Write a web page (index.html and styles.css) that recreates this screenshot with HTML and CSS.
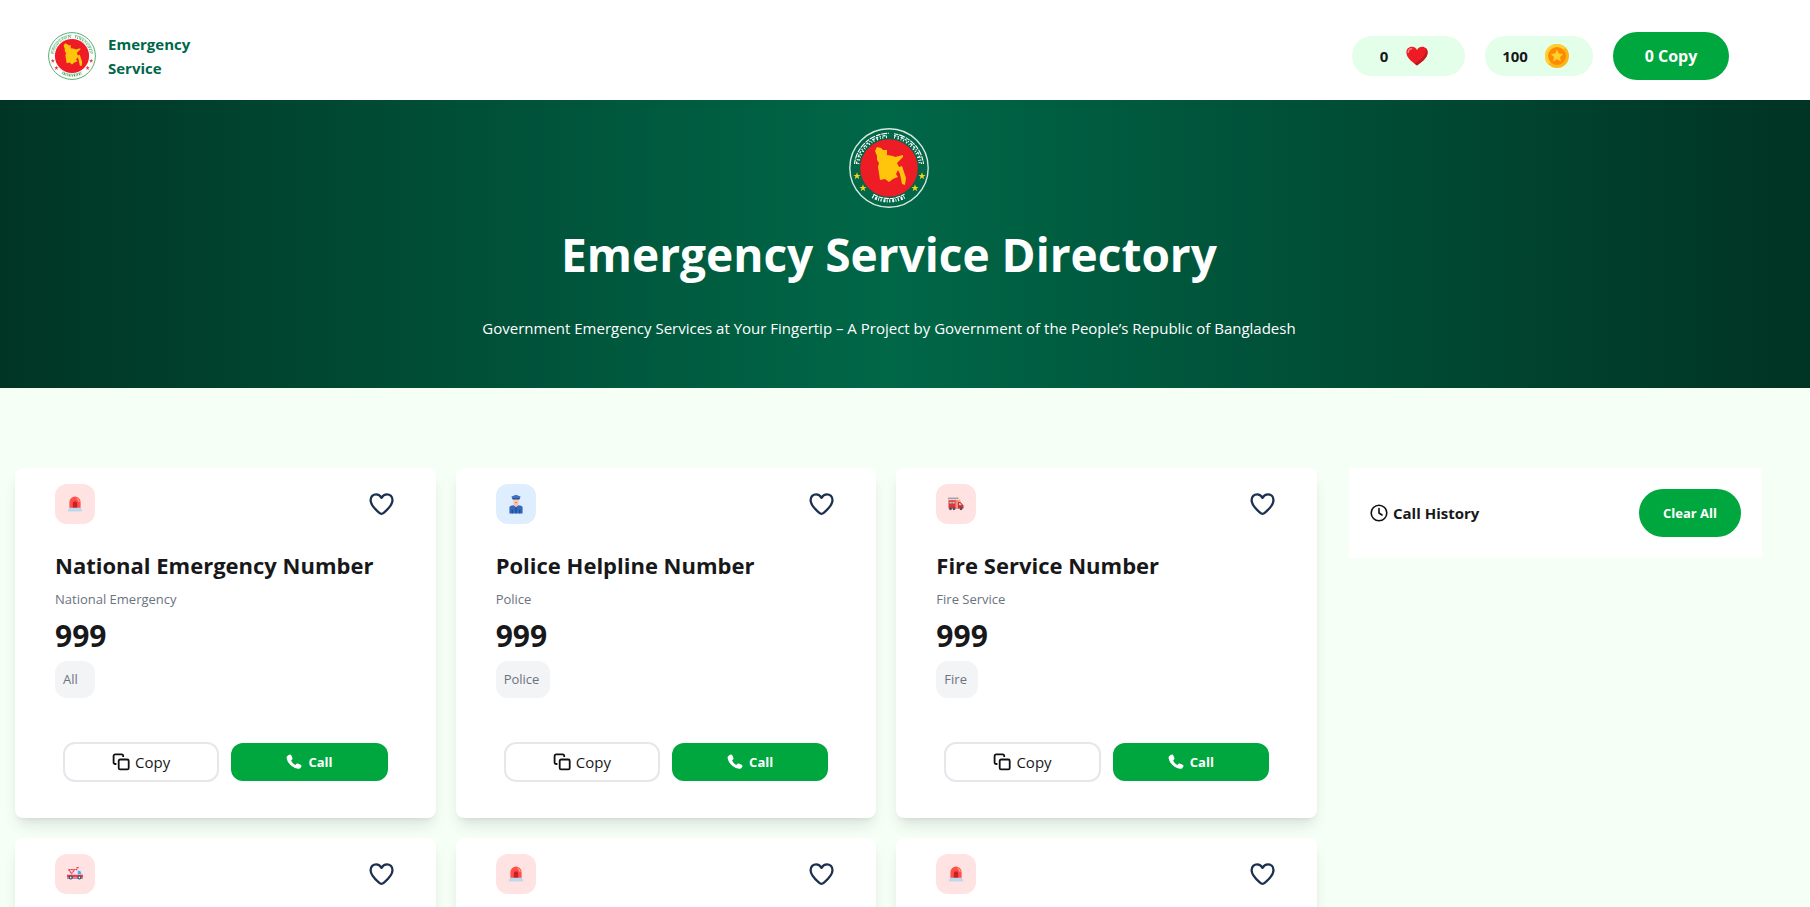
FILE: index.html
```html
<!DOCTYPE html>
<html lang="en">
<head>
<meta charset="utf-8">
<title>Emergency Service Directory</title>
<link rel="stylesheet" href="styles.css">
</head>
<body>
<svg class="sprite" aria-hidden="true">
  <symbol id="map" viewBox="0 0 80 80">
    <path d="M26 23l2-4 4 1 2 2 4 0 0 5 6 1 2 1 8-2 0 2-4 4-2 2 2 4 3-1 2 6 2 6-1 7-3-1-2-10-2-4-2 4 2 3-5 2-4 3-4-3-5 1-1-7-1-6 1-4-2-3 0-4z"/>
  </symbol>
  <symbol id="star" viewBox="-5 -5 10 10"><path d="M0-4.600L1.200-1.400H4.600L1.800.700 2.800 4 0 2-2.800 4-1.800.700-4.600-1.400H-1.200z"/></symbol>
  <symbol id="heart" viewBox="0 0 28 24">
    <path d="M13.500 21.800C12.600 21.800 11.800 21.300 11 20.600 5.700 16 2.600 12.600 2.600 8.200 2.600 4.600 5.100 2.300 8.200 2.300c2.200 0 3.900 1.100 5.300 3.600C14.900 3.400 16.700 2.300 18.900 2.300c3.100 0 5.600 2.300 5.600 5.900 0 4.400-3.200 7.800-8.500 12.400-.8.700-1.600 1.200-2.500 1.200z" fill="none" stroke="#1c3050" stroke-width="2.300" stroke-linejoin="round"/>
  </symbol>
  <symbol id="copy" viewBox="0 0 18 18">
    <rect x="6.700" y="6.500" width="10" height="9.800" rx="1.400" fill="none" stroke="#111" stroke-width="1.800"/>
    <path d="M4.400 11H3.200A1.600 1.600 0 0 1 1.600 9.400V3A1.600 1.600 0 0 1 3.200 1.400H9.600A1.600 1.600 0 0 1 11.200 3V4" fill="none" stroke="#111" stroke-width="1.800"/>
  </symbol>
  <symbol id="phone" viewBox="0 0 16 16">
    <path d="M3.300.700C4.200.200 5 .5 5.400 1.400l1 2.600c.3.700.1 1.200-.5 1.700l-.8.700c.8 1.800 2.300 3.500 4.200 4.500l.9-.9c.5-.6 1-.7 1.700-.4l2.700 1.200c.9.400 1.100 1.100.7 2-.7 1.500-1.800 2.300-3.400 2C6.500 14 1.500 9.300.600 4 .3 2.500 1.700 1.500 3.300.700z" fill="#fff"/>
  </symbol>
  <symbol id="siren" viewBox="0 0 16 16">
    <path d="M2.400 12V6.200a5.600 5.600 0 0 1 11.200 0V12z" fill="#ff5148"/>
    <path d="M5.800 12V7.400a2.200 2.200 0 0 1 4.400 0V12z" fill="#c91f28"/>
    <path d="M9.600 2.200a4 4 0 0 1 2.500 3.700" fill="none" stroke="#ffb3ad"/>
    <path d="M2 11.800h12l1.400 3.700H.6z" fill="#bcd9ee"/>
  </symbol>
  <symbol id="police" viewBox="0 0 16 20">
    <path d="M3.500 2.500 8 .8l4.500 1.700-.8 2.800H4.300z" fill="#3f72c0"/>
    <path d="M5.200 5h5.600v4a2.800 2.800 0 0 1-5.600 0z" fill="#f9c8b0"/>
    <path d="M4.700 4.200h6.600v1.300H4.700z" fill="#234b91"/>
    <path d="M7 8.700h2" stroke="#e66d61"/>
    <path d="M6.500 10.500h3v3h-3z" fill="#f6bfa2"/>
    <path d="M1.400 19.400v-6q0-1.600 4.400-2.100L8 13.600l2.200-2.300q4.400.5 4.400 2.100v6z" fill="#326bbd"/>
    <path d="M8 13v6.400M4.200 15.500v4M11.800 15.500v4" stroke="#1e458a"/>
  </symbol>
  <symbol id="fire" viewBox="0 0 16 16">
    <path d="M.5 4.200h10V12.500H.5z" fill="#df3535"/>
    <path d="M10 6h2.500l3 3.500v3H10z" fill="#d02c32"/>
    <path d="M7.500 4.200h2.500v8.300H7.500z" fill="#f28e89"/>
    <path d="M1.500 5.800h2.200v1.800H1.500zM4.500 5.800h2.200v1.800H4.500zM11 7h1.200l1.700 2.300H11z" fill="#a8d7ed"/>
    <path d="M0 2.200h10.500" stroke="#7a7f86"/>
    <path d="M1 4.200V2.200M4 4.200V2.200M7 4.200V2.200" stroke="#a9adb3" stroke-width=".7"/>
    <path d="M10.800 3.500h1.600v2.500h-1.600z" fill="#ffae35"/>
    <g fill="#4b4e57"><circle cx="2.500" cy="12.800" r="1.400"/><circle cx="6" cy="12.800" r="1.400"/><circle cx="13" cy="12.800" r="1.400"/></g>
  </symbol>
  <symbol id="ambulance" viewBox="0 0 16 16">
    <path d="M.2 8h9.300L10.500 4.700h3l1.600 3.500.6.500V12H.2z" fill="#f3f5f8"/>
    <path d="M10.700 4.700h2.500l1.500 3.600h-4z" fill="#3fb3ec"/>
    <path d="M0 8.700h16v2.900H0z" fill="#ee3a54"/>
    <path d="M1.500 3.700 4.600 7.500 7.600 3.700H1.500M9 4.200l2.500-3M9.500 1.700h1" fill="none" stroke="#ee3a54" stroke-width="1.200" stroke-dasharray="1.800 .5"/>
    <path d="M0 12.500h16" stroke="#858b96" stroke-width=".8"/>
    <g fill="#3c4656"><circle cx="3.700" cy="11.500" r="2"/><circle cx="12.400" cy="11.500" r="2"/></g>
    <g fill="#e8ebef"><circle cx="3.700" cy="11.500" r=".9"/><circle cx="12.400" cy="11.500" r=".9"/></g>
  </symbol>
  <symbol id="ring" viewBox="0 0 80 80">
    <g fill="none" stroke="currentColor">
      <path d="M7.500 36A32.700 32.700 0 0 1 38 7.400M45 7.700A32.700 32.700 0 0 1 72.500 36" stroke-width="1.300" stroke-dasharray="2.400 1.500 1.200 1.900 3 1.200"/>
      <path d="M9.300 36A31 31 0 0 1 38 9.100M45 9.400A31 31 0 0 1 70.700 36" stroke-width="2" stroke-dasharray="1 2.700 1.300 2 .8 1.600"/>
      <path d="M5.500 36A34.700 34.700 0 0 1 40 5.300M45 5.700A34.700 34.700 0 0 1 74.500 36" stroke-width="1.100" stroke-dasharray="4.600 .8 6 1"/>
      <path d="M23.500 68.500A33 33 0 0 0 56.500 68.500" stroke-width="3.200" stroke-dasharray="1.200 1.800 2 1.300 .9 1.500"/>
      <path d="M24.500 66.300A30.500 30.500 0 0 0 55.500 66.300" stroke-width="1.100" stroke-dasharray="5 .7"/>
    </g>
  </symbol>
</svg>

<header class="topbar">
  <div class="brand">
    <svg class="brand-logo" viewBox="0 0 80 80" role="img" aria-label="Government seal">
      <circle cx="40" cy="40" r="39" fill="#fff" stroke="#4cab68" stroke-width="1.600"/>
      <use href="#ring" width="80" height="80" color="#3f9d59"/>
      <circle cx="40" cy="40" r="28.500" fill="#ee1c25"/>
      <use href="#map" width="80" height="80" fill="#ffc40c"/>
      <g fill="#ee3840"><use href="#star" x="4" y="44" width="8" height="8"/><use href="#star" x="10" y="56" width="8" height="8"/><use href="#star" x="68" y="44" width="8" height="8"/><use href="#star" x="62" y="56" width="8" height="8"/></g>
    </svg>
    <p class="brand-name">Emergency<br>Service</p>
  </div>
  <div class="stats">
    <div class="pill pill-hearts"><span>0</span>
      <svg class="icon-24" viewBox="0 0 24 24"><path d="M12 21.500C4.500 16.500 1.400 12.500 1.400 8.300 1.400 4.900 3.800 2.700 6.800 2.700c2.200 0 4.200 1.100 5.200 3.300 1-2.200 3-3.300 5.200-3.300 3 0 5.400 2.200 5.400 5.600 0 4.200-3.100 8.200-10.600 13.200z" fill="#ed1c24"/><path d="M20.900 4.200c1 3.800-1.500 9.800-11.500 15.400L12 21.500c7.500-5 10.600-9 10.600-13.200 0-1.700-.6-3.100-1.700-4.100z" fill="#c4161e"/><path d="M3.300 8.300C3.300 6.200 4.700 4.700 6.500 4.700" fill="none" stroke="#f9848a" stroke-width="1.600" stroke-linecap="round"/></svg>
    </div>
    <div class="pill pill-coins"><span>100</span>
      <svg class="icon-24" viewBox="0 0 24 24"><circle cx="12" cy="12" r="12" fill="#fdb515"/><path d="M12 0a12 12 0 0 0-8.500 20.500L20.500 3.500A12 12 0 0 0 12 0z" fill="#ffd02f"/><circle cx="12" cy="12" r="9" fill="#ff8a00"/><path d="M12 5.500l1.900 4.100 4.400.500-3.300 3 1 4.400-4-2.300-4 2.300 1-4.400-3.300-3 4.400-.5z" fill="#ffd02f"/></svg>
    </div>
    <button class="copy-count" type="button">0 Copy</button>
  </div>
</header>

<section class="hero">
  <svg class="hero-logo" viewBox="0 0 80 80" role="img" aria-label="Government seal">
    <circle cx="40" cy="40" r="39.200" fill="#006747" stroke="#d8e8e2" stroke-width="1.400"/>
    <use href="#ring" width="80" height="80" color="#fff"/>
    <circle cx="40" cy="40" r="28.800" fill="#ee1c25"/>
    <use href="#map" width="80" height="80" fill="#ffc40c"/>
    <g fill="#f5d21c"><use href="#star" x="4" y="44" width="8" height="8"/><use href="#star" x="10" y="56" width="8" height="8"/><use href="#star" x="69" y="44" width="8" height="8"/><use href="#star" x="62" y="56" width="8" height="8"/></g>
  </svg>
  <h1>Emergency Service Directory</h1>
  <p>Government Emergency Services at Your Fingertip – A Project by Government of the People’s Republic of Bangladesh</p>
</section>

<main class="content">
  <section class="cards" aria-label="Services">
    <article class="card">
      <div class="card-top"><span class="badge"><svg class="icon-16"><use href="#siren"/></svg></span><button class="like" type="button" aria-label="Favourite"><svg><use href="#heart"/></svg></button></div>
      <h2>National Emergency Number</h2><p class="sub">National Emergency</p><p class="number">999</p><span class="tag">All</span>
      <div class="actions"><button class="copy" type="button"><svg class="icon-18"><use href="#copy"/></svg>Copy</button><button class="call" type="button"><svg class="icon-16"><use href="#phone"/></svg>Call</button></div>
    </article>
    <article class="card">
      <div class="card-top"><span class="badge badge-blue"><svg class="icon-20"><use href="#police"/></svg></span><button class="like" type="button" aria-label="Favourite"><svg><use href="#heart"/></svg></button></div>
      <h2>Police Helpline Number</h2><p class="sub">Police</p><p class="number">999</p><span class="tag">Police</span>
      <div class="actions"><button class="copy" type="button"><svg class="icon-18"><use href="#copy"/></svg>Copy</button><button class="call" type="button"><svg class="icon-16"><use href="#phone"/></svg>Call</button></div>
    </article>
    <article class="card">
      <div class="card-top"><span class="badge"><svg class="icon-16"><use href="#fire"/></svg></span><button class="like" type="button" aria-label="Favourite"><svg><use href="#heart"/></svg></button></div>
      <h2>Fire Service Number</h2><p class="sub">Fire Service</p><p class="number">999</p><span class="tag">Fire</span>
      <div class="actions"><button class="copy" type="button"><svg class="icon-18"><use href="#copy"/></svg>Copy</button><button class="call" type="button"><svg class="icon-16"><use href="#phone"/></svg>Call</button></div>
    </article>
    <article class="card">
      <div class="card-top"><span class="badge"><svg class="icon-16"><use href="#ambulance"/></svg></span><button class="like" type="button" aria-label="Favourite"><svg><use href="#heart"/></svg></button></div>
    </article>
    <article class="card">
      <div class="card-top"><span class="badge"><svg class="icon-16"><use href="#siren"/></svg></span><button class="like" type="button" aria-label="Favourite"><svg><use href="#heart"/></svg></button></div>
    </article>
    <article class="card">
      <div class="card-top"><span class="badge"><svg class="icon-16"><use href="#siren"/></svg></span><button class="like" type="button" aria-label="Favourite"><svg><use href="#heart"/></svg></button></div>
    </article>
  </section>
  <aside class="history">
    <h3><svg class="icon-18" viewBox="0 0 18 18" fill="none" stroke="#111" stroke-width="1.600" stroke-linecap="round"><circle cx="9" cy="9" r="7.800"/><path d="M9 4.500V9l3 2"/></svg>Call History</h3>
    <button class="clear" type="button">Clear All</button>
  </aside>
</main>
</body>
</html>
```

FILE: styles.css
```css
* { box-sizing: border-box; margin: 0; }
body {
  height: 100vh;
  overflow: hidden;
  background: #f5fff6;
  color: #18181b;
  font-family: "Segoe UI", "Open Sans", "Noto Sans", sans-serif;
  font-size: 16px;
  line-height: 24px;
}
button { font: inherit; color: inherit; border: 0; background: none; padding: 0; cursor: pointer; }
svg { display: block; flex: none; }
.sprite { display: none; }
.icon-16 { width: 16px; height: 16px; }
.icon-18 { width: 18px; height: 18px; }
.icon-20 { width: 16px; height: 20px; }
.icon-24 { width: 24px; height: 24px; }

.topbar {
  display: flex;
  align-items: center;
  justify-content: space-between;
  padding: 32px 81px 20px 48px;
  background: #fff;
}
.brand { display: flex; align-items: center; gap: 12px; }
.brand-logo { width: 48px; height: 48px; }
.brand-name { color: #00684a; font-size: 15px; font-weight: 700; }
.stats { display: flex; align-items: center; gap: 20px; font-size: 15px; font-weight: 700; }
.pill { display: flex; align-items: center; justify-content: center; gap: 17px; height: 40px; border-radius: 20px; background: #e4ffe9; }
.pill-hearts { width: 113px; padding-right: 8px; }
.pill-coins { width: 108px; padding-right: 7px; }
.copy-count { min-width: 116px; height: 48px; padding: 0 24px; border-radius: 24px; background: #00a63e; color: #fff; font-size: 16px; font-weight: 700; }

.hero {
  display: flex;
  flex-direction: column;
  align-items: center;
  padding: 28px 32px 46px 0;
  background: linear-gradient(90deg, #003525, #006747 49%, #003525 98%);
  color: #fff;
  text-align: center;
}
.hero-logo { width: 80px; height: 80px; }
.hero h1 { margin: 22px 0 36px; font-size: 46px; line-height: 48px; font-weight: 700; }
.hero p { font-size: 15px; line-height: 28px; }

.content {
  display: grid;
  grid-template-columns: 1302fr 413fr;
  gap: 32px;
  align-items: start;
  padding: 80px 48px 0 15px;
}
.cards { display: grid; grid-template-columns: repeat(3, 1fr); grid-auto-rows: minmax(350px, auto); gap: 20px; }
.card {
  padding: 16px 40px 36px;
  border-radius: 8px;
  background: #fff;
  box-shadow: 0 10px 15px -3px rgba(0, 0, 0, .1), 0 4px 6px -4px rgba(0, 0, 0, .1);
}
.card-top { display: flex; align-items: center; justify-content: space-between; }
.badge { display: grid; place-items: center; width: 40px; height: 40px; border-radius: 12px; background: #ffe2e2; }
.badge-blue { background: #dfeeff; }
.like svg { width: 28px; height: 24px; }
.card h2 { margin-top: 23px; font-size: 22px; line-height: 36px; font-weight: 700; white-space: nowrap; }
.sub { margin-top: 6px; color: #6b7280; font-size: 13px; line-height: 20px; }
.number { margin-top: 9px; font-size: 30px; line-height: 36px; font-weight: 700; }
.tag {
  display: block;
  width: fit-content;
  min-width: 40px;
  margin-top: 7px;
  padding: 8px 11px 8px 8px;
  border-radius: 12px;
  background: #f3f4f6;
  color: #6b7280;
  font-size: 13px;
  line-height: 21px;
}
.actions { display: grid; grid-template-columns: 1fr 1fr; align-items: center; gap: 12px; margin-top: 44px; padding: 0 8px; }
.copy, .call { display: flex; align-items: center; justify-content: center; border-radius: 12px; }
.copy { height: 40px; gap: 5px; border: 2px solid #e5e7eb; font-size: 15px; }
.call { height: 38px; gap: 6px; background: #00a63e; color: #fff; font-size: 13px; font-weight: 700; }

.history { display: flex; align-items: center; justify-content: space-between; padding: 21px; background: #fff; }
.history h3 { display: flex; align-items: center; gap: 5px; font-size: 15px; font-weight: 700; }
.clear { height: 48px; padding: 0 24px; border-radius: 24px; background: #00a63e; color: #fff; font-size: 13px; font-weight: 700; }
```
